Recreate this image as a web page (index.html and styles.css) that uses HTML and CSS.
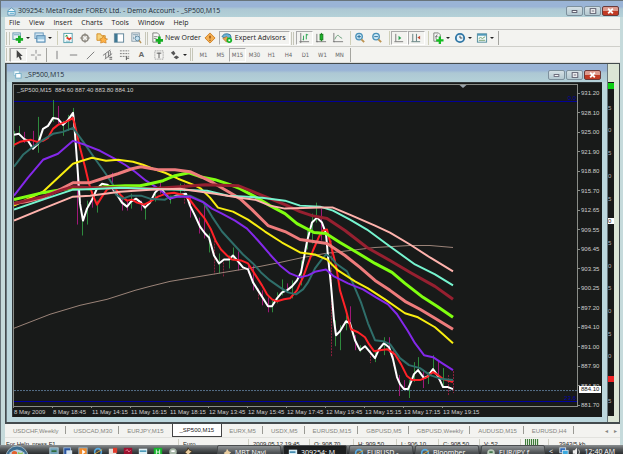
FILE: index.html
```html
<!DOCTYPE html>
<html lang="en">
<head>
<meta charset="utf-8">
<title>309254: MetaTrader FOREX Ltd. - Demo Account - _SP500,M15</title>
<link rel="stylesheet" href="styles.css">
</head>
<body>
<main class="app">
  <header class="titlebar">
    <svg class="app-icon" viewBox="0 0 10 10"><path d="M1 4L5 1L9 4V9H1Z" fill="#eaf6fb" stroke="#5b93b5"/><path d="M1 5H9M3 7H8" stroke="#4aa3c7"/></svg>
    <h1 class="title">309254: MetaTrader FOREX Ltd. - Demo Account - _SP500,M15</h1>
    <div class="controls">
      <button class="ctl" aria-label="Minimize"><svg viewBox="0 0 16 8"><rect x="5.500" y="3.500" width="5" height="2" fill="#fff" stroke="#556"/></svg></button>
      <button class="ctl" aria-label="Restore"><svg viewBox="0 0 16 8"><rect x="5.500" y="1.500" width="6" height="5" fill="#fff" stroke="#556"/><path d="M7 4H10" stroke="#556"/></svg></button>
      <button class="ctl close" aria-label="Close"><svg viewBox="0 0 16 8"><path d="M5.500 1.500L10.500 6.500M10.500 1.500L5.500 6.500" stroke="#fff" stroke-width="2"/></svg></button>
    </div>
  </header>
  <div class="client">
    <nav class="menu">
      <button>File</button><button>View</button><button>Insert</button><button>Charts</button><button>Tools</button><button>Window</button><button>Help</button>
    </nav>
    <div class="toolbar main-tools">
      <i class="grip"></i>
      <button class="tool drop" aria-label="New chart"><svg viewBox="0 0 13 13"><rect x="1" y="1" width="8" height="7" fill="#e8f1f6" stroke="#5f94ae"/><path d="M2 3H8" stroke="#6ba4bd"/><path d="M8 4V12M4 8H12" stroke="#15ad22" stroke-width="3"/></svg></button>
      <button class="tool drop" aria-label="Profiles"><svg viewBox="0 0 13 13"><rect x="1" y="1" width="9" height="6" fill="#cfe4f1" stroke="#6698bb"/><rect x="3" y="4" width="9" height="7" fill="#9cc7e0" stroke="#5386ad"/><path d="M4 9H11" stroke="#e8f6ff" stroke-width="2"/></svg></button>
      <i class="sep"></i>
      <button class="tool" aria-label="Market watch"><svg viewBox="0 0 13 13"><rect x="2" y="1.500" width="9" height="10" fill="#fff" stroke="#509dac"/><path d="M3 5L5 3L7 5Z" fill="#25a234"/><path d="M5 6L8 8L10 6" stroke="#e03a22" fill="none" stroke-width="2"/><path d="M4 10H9" stroke="#79b8c8"/></svg></button>
      <button class="tool" aria-label="Data window"><svg viewBox="0 0 13 13"><circle cx="6.500" cy="6.500" r="3.500" fill="none" stroke="#8b877e" stroke-width="1.500"/><path d="M6.500 1V5M6.500 8V12M1 6.500H5M8 6.500H12" stroke="#8b877e"/></svg></button>
      <button class="tool" aria-label="Navigator"><svg viewBox="0 0 13 13"><path d="M1 2H5L6 4H10V9H1Z" fill="#f7d37c" stroke="#d48d26"/><path d="M8 4L9.500 7L12.500 7.500L10.500 9.500L11 12L8 11L5 12L5.500 9L4 7.500L6.500 7Z" fill="#ffb347" stroke="#c77b1e" stroke-width=".7"/></svg></button>
      <button class="tool" aria-label="Terminal"><svg viewBox="0 0 13 13"><rect x="1.500" y="2" width="10" height="9" fill="#fff" stroke="#5d8298"/><rect x="2" y="2" width="3" height="9" fill="#3f7893"/></svg></button>
      <button class="tool" aria-label="Strategy tester"><svg viewBox="0 0 13 13"><rect x="2" y="1" width="8" height="9" fill="#edf2f5" stroke="#879ba7"/><path d="M3 3H9M4 5V8M6 4V7" stroke="#7595a6"/><circle cx="8" cy="7" r="2.500" fill="#c3e1f2" stroke="#638ba3"/><path d="M10 9L12 12" stroke="#b99253" stroke-width="1.500"/></svg></button>
      <i class="grip"></i>
      <button class="tool wide order"><svg viewBox="0 0 13 13"><path d="M2 1H7L9 3V11H2Z" fill="#f7f7f7" stroke="#7b8078"/><path d="M3 5H7M3 7H6" stroke="#8a8f86"/><path d="M9 5V13M5 9H13" stroke="#15ad22" stroke-width="3"/></svg>New Order</button>
      <button class="tool" aria-label="MetaEditor"><svg viewBox="0 0 13 13"><path d="M6.500 1L12 6.500L6.500 12L1 6.500Z" fill="#f4b053" stroke="#cf8126"/><path d="M6.500 4V7M6.500 8.500V9.500" stroke="#8d4b10" stroke-width="1.500"/></svg></button>
      <button class="tool wide pressed expert"><svg viewBox="0 0 13 13"><path d="M1 5Q3 1 7 2Q11 2 11 6L7 8Z" fill="#6ab3d6" stroke="#3a7b9d"/><path d="M2 7L6 11L9 8L6 5Z" fill="#e5a755" stroke="#a66e23" stroke-width=".7"/><circle cx="9" cy="9" r="3" fill="#14b325"/><rect x="8" y="8" width="2" height="2" fill="#fff"/></svg>Expert Advisors</button>
      <i class="grip"></i>
      <button class="tool pressed" aria-label="Bar chart"><svg viewBox="0 0 13 13"><path d="M3 1V10.500H12M1.500 10.500H3M3 10V12" stroke="#777" fill="none"/><path d="M6 4V9M5 8H6M9 2V8M9 3H11" stroke="#22a14b"/></svg></button>
      <button class="tool" aria-label="Candlesticks"><svg viewBox="0 0 13 13"><path d="M2 2V10.500H12M1 10.500H3" stroke="#777" fill="none"/><path d="M7 1V10" stroke="#167d1c"/><rect x="5.500" y="2.500" width="3" height="6" fill="#19b428" stroke="#167d1c"/></svg></button>
      <button class="tool" aria-label="Line chart"><svg viewBox="0 0 13 13"><path d="M2 1V10.500H12M1 10.500H3" stroke="#777" fill="none"/><path d="M3 8Q6 1 8 5L11 7" stroke="#69a079" fill="none"/></svg></button>
      <i class="sep"></i>
      <button class="tool" aria-label="Zoom in"><svg viewBox="0 0 13 13"><circle cx="5.500" cy="5" r="3.500" fill="#cdeaf7" stroke="#4b92b9" stroke-width="1.500"/><path d="M3.500 5H7.500M5.500 3V7" stroke="#286b98"/><path d="M8 8L11 11" stroke="#bd9350" stroke-width="2"/></svg></button>
      <button class="tool" aria-label="Zoom out"><svg viewBox="0 0 13 13"><circle cx="5.500" cy="5" r="3.500" fill="#cdeaf7" stroke="#4b92b9" stroke-width="1.500"/><path d="M3.500 5H7.500" stroke="#286b98"/><path d="M8 8L11 11" stroke="#bd9350" stroke-width="2"/></svg></button>
      <i class="sep"></i>
      <button class="tool pressed" aria-label="Auto scroll"><svg viewBox="0 0 13 13"><path d="M3 2V10.500H11M1.500 10.500H3" stroke="#777" fill="none"/><path d="M6 4L9 6.500L6 9Z" fill="#22a14b"/></svg></button>
      <button class="tool pressed" aria-label="Chart shift"><svg viewBox="0 0 13 13"><path d="M3 2V10.500H11M1.500 10.500H3M7 2V10" stroke="#5a7a7a" fill="none"/><path d="M11 4L8 6L11 8Z" fill="#c04a35"/></svg></button>
      <i class="sep"></i>
      <button class="tool drop" aria-label="Indicators"><svg viewBox="0 0 13 13"><path d="M2 1H7L9 3V10H2Z" fill="#f7f7f7" stroke="#7b8078"/><path d="M6 3Q4 3 4.500 8M3.500 5H6" stroke="#777" fill="none"/><path d="M8.500 5V13M4.500 9H12.500" stroke="#15bd22" stroke-width="2.500"/></svg></button>
      <button class="tool drop" aria-label="Periods"><svg viewBox="0 0 13 13"><circle cx="6.500" cy="6.500" r="4.500" fill="#e7f4fb" stroke="#2f76a5" stroke-width="2"/><path d="M6.500 4V6.500H9" stroke="#444" fill="none"/></svg></button>
      <button class="tool drop" aria-label="Templates"><svg viewBox="0 0 13 13"><rect x="1.500" y="2" width="10" height="9" fill="#f2fafa" stroke="#4f899b"/><path d="M2 3H11" stroke="#4f99b9" stroke-width="2"/><path d="M3 7L5 6L7 7L10 5M3 9H10" stroke="#729d68" fill="none"/></svg></button>
      <i class="sep thin"></i>
    </div>
    <div class="toolbar line-tools">
      <i class="grip"></i>
      <button class="tool pressed" aria-label="Cursor"><svg viewBox="0 0 13 13"><path d="M4 1V10L6 8L8 12L9.500 11L8 7.500H10.500Z" fill="#444"/></svg></button>
      <button class="tool" aria-label="Crosshair"><svg viewBox="0 0 13 13"><path d="M6.500 1V5M6.500 8V12M1 6.500H5M8 6.500H12" stroke="#888"/></svg></button>
      <i class="sep thin"></i>
      <button class="tool" aria-label="Vertical line"><svg viewBox="0 0 13 13"><path d="M6.500 2V11" stroke="#777"/></svg></button>
      <button class="tool" aria-label="Horizontal line"><svg viewBox="0 0 13 13"><path d="M2 6.500H10" stroke="#777"/></svg></button>
      <button class="tool" aria-label="Trendline"><svg viewBox="0 0 13 13"><path d="M2 11L10 3" stroke="#777"/></svg></button>
      <button class="tool" aria-label="Channel"><svg viewBox="0 0 13 13"><path d="M1 7L9 1M3 11L11 5M4 5V10M7 3V9M9 2V7" stroke="#777"/><path d="M8 11H11M8 9H11" stroke="#555"/></svg></button>
      <button class="tool" aria-label="Fibonacci"><svg viewBox="0 0 13 13"><path d="M1 2H11M1 5H11M1 8H11" stroke="#777" stroke-dasharray="2 1"/><path d="M8 8V12M8 10H11" stroke="#555"/></svg></button>
      <button class="tool letter" aria-label="Text">A</button>
      <button class="tool" aria-label="Text label"><svg viewBox="0 0 13 13"><rect x="2" y="2" width="9" height="9" fill="none" stroke="#888" stroke-dasharray="1 1"/><path d="M4 4.500H9M6.500 4V10" stroke="#555"/></svg></button>
      <button class="tool drop" aria-label="Arrows"><svg viewBox="0 0 13 13"><path d="M2 4L5 2L7 5L5 7Z" fill="#555"/><path d="M5 9L8 7L11 9L8 11Z" fill="#555"/></svg></button>
      <i class="grip"></i>
      <button class="tool period">M1</button><button class="tool period">M5</button><button class="tool period pressed">M15</button><button class="tool period">M30</button><button class="tool period">H1</button><button class="tool period">H4</button><button class="tool period">D1</button><button class="tool period">W1</button><button class="tool period">MN</button>
      <i class="sep thin"></i>
    </div>

    <section class="mdi">
      <article class="child">
        <header class="titlebar child-title">
          <svg class="app-icon" viewBox="0 0 10 10"><rect x="1" y="1" width="6" height="5" fill="#f3fafc" stroke="#8dbdd2"/><rect x="3" y="4" width="6" height="5" fill="#fff" stroke="#6ba9c4"/></svg>
          <h2 class="title">_SP500,M15</h2>
          <div class="controls">
            <button class="ctl" aria-label="Minimize chart"><svg viewBox="0 0 16 8"><rect x="5.500" y="3.500" width="5" height="2" fill="#fff" stroke="#667"/></svg></button>
            <button class="ctl" aria-label="Maximize chart"><svg viewBox="0 0 16 8"><rect x="5.500" y="1.500" width="6" height="5" fill="#fff" stroke="#556"/><path d="M7 4H10" stroke="#556"/></svg></button>
            <button class="ctl close" aria-label="Close chart"><svg viewBox="0 0 16 8"><path d="M5.500 1.500L10.500 6.500M10.500 1.500L5.500 6.500" stroke="#fff" stroke-width="2"/></svg></button>
          </div>
        </header>
        <div class="chart">
          <div class="plot">
            <svg class="series" viewBox="14 84 563 322" preserveAspectRatio="none" fill="none" stroke-linejoin="round">
              <path class="level" d="M14 100.500H577M14 401.500H577" stroke="#0000a0"/>
              <path class="level" d="M14 390.500H577" stroke="#56708a" stroke-dasharray="2 1"/>
              <path d="M459.500 84H466.500L463 87Z" fill="#9aa4ac"/>
              <path class="level" stroke="#2e8b3d" d="M14.500 130V146M19.500 125V135M38.500 116V152M53.500 99V121M63.500 120V135M68.500 114V130M73.500 107V120M82.500 216V235M87.500 200V224M97.500 200V212M131.500 193V208M145.500 207V219M155.500 190V201M170.500 195V203M180.500 183V197M209.500 233V252M219.500 253V273M229.500 255V268M233.500 247V260M272.500 300V312M277.500 292V303M282.500 279V295M292.500 280V298M301.500 260V285M307.500 230V249M312.500 213V243M316.500 202V222M335.500 320V346M340.500 325V350M346.500 315V330M360.500 345V352M375.500 350V362M384.500 337V355M409.500 380V398M414.500 362V382M418.500 357V372M428.500 372V384M433.500 355V372M443.500 368V387"/>
              <path class="level" stroke="#a01878" d="M24.500 131V142M33.500 130V148M58.500 105V123M77.500 170V224M92.500 197V207M112.500 172V190M122.500 195V210M127.500 200V210M141.500 200V210M160.500 182V193M190.500 195V217M199.500 217V233M204.500 205V238M238.500 251V270M248.500 265V273M253.500 265V290M262.500 290V305M268.500 297V312M287.500 283V292M321.500 208V240M350.500 306V330M355.500 335V350M389.500 337V352M399.500 375V396M404.500 380V390M423.500 370V388M438.500 360V380"/>
              <path class="level" stroke="#8d1f3d" stroke-dasharray="2 1" d="M184.500 183V203M214.500 240V274M223.500 262V276M258.500 288V300M331.500 240V356M370.500 350V363M393.500 350V366M448.500 375V395M453.500 371V393"/>
              <polyline stroke="#9b8478" points="14,328 50,314 80,305 107,299 135,290 150,286 170,281 200,276 230,271 260,266 280,262 303,257 325,253 350,250 375,247 410,245 430,245 453,247"/>
              <polyline stroke="#fff" stroke-width="2" points="14,134 19,133 24,138 28,140 33,148 38,143 43,128 48,125 53,117 58,118 63,124 68,119 73,112 74,120 77,160 80,203 83,220 87,208 92,199 97,188 102,183 107,184 112,187 117,194 122,202 127,206 131,201 136,198 141,202 145,207 150,202 155,192 160,187 165,193 170,198 176,195 181,194 186,193 190,205 195,215 200,226 205,233 209,237 214,255 219,263 224,259 229,259 233,255 238,261 243,267 248,269 253,282 258,290 263,298 268,306 272,306 277,298 282,292 287,290 292,286 297,280 301,272 304,257 307,241 312,222 317,217 322,222 326,233 328,256 331,285 334,320 336,335 340,331 346,321 350,323 355,340 360,350 365,346 370,352 375,358 379,349 384,343 389,347 393,359 397,377 400,384 404,389 408,389 411,382 414,374 418,370 424,378 428,376 433,369 438,376 443,387 448,387 453,389"/>
              <polyline stroke="#ff2228" stroke-width="2" points="14,144 20,141 25,140 31,139 37,141 43,140 48,137 53,128 58,124 63,122 68,120 73,117 76,129 80,147 85,166 89,183 93,195 97,204 102,196 107,189 112,187 117,190 122,196 127,200 132,199 137,202 144,204 150,201 158,196 166,193 174,192 182,194 189,198 195,206 204,217 211,229 216,241 221,249 227,255 232,259 241,260 248,263 255,274 262,285 267,294 272,299 277,301 284,299 290,298 297,290 303,277 307,266 313,250 319,236 323,230 327,229 331,245 336,265 340,290 346,310 351,329 358,332 365,337 369,344 374,351 380,350 387,349 395,354 401,364 407,376 412,380 420,380 427,377 433,372 438,375 443,379 453,382"/>
              <polyline stroke="#2f6e6a" stroke-width="2" points="14,166 23,154 33,146 43,139 53,133 63,131 73,127 84,142 95,158 105,172 113,184 116,194 123,198 131,195 141,195 150,198 165,199 170,196 190,195 203,201 212,216 222,231 232,242 243,254 253,263 261,272 270,280 280,287 288,292 296,294 303,289 308,282 315,268 321,260 326,254 331,257 336,263 347,271 353,283 361,302 368,323 375,340 383,341 390,344 400,358 409,365 420,368 430,375 442,379 453,380"/>
              <polyline stroke="#8428ea" stroke-width="2" points="14,195 28,177 43,159 58,153 73,140 85,144 100,150 115,158 125,164 135,171 146,180 160,189 170,198 178,196 190,196 204,202 212,208 222,213 235,220 247,228 258,240 270,254 280,265 290,273 300,277 308,275 316,271 326,269 334,276 348,283 363,289 376,297 388,304 397,314 408,331 415,343 424,355 433,357 442,363 453,370"/>
              <polyline stroke="#f8ee10" stroke-width="2" points="14,205 43,191 58,177 73,163 82,160 92,157 106,160 118,159 133,161 143,164 153,168 165,172 178,178 193,184 201,188 210,197 218,207 233,211 248,219 265,231 282,242 300,252 315,254 327,259 338,270 355,281 368,288 385,299 405,313 418,317 435,327 443,334 453,343"/>
              <polyline stroke="#7fff10" stroke-width="3" points="14,199 43,192 73,187 90,188 105,186 125,185 140,185 150,183 163,180 175,175 189,172 200,176 215,179 230,184 240,188 255,196 270,205 285,213 297,223 314,232 326,233 340,242 357,252 375,263 392,272 405,283 423,297 437,306 453,317"/>
              <polyline stroke="#ee7c7c" stroke-width="3" points="14,203 27,201 43,197 58,190 73,182 90,182 105,177 118,173 132,168 141,166 158,169 175,169 190,171 205,178 213,182 225,189 240,198 252,209 268,225 285,231 300,239 327,243 345,255 360,267 375,280 390,290 405,301 420,309 435,318 453,329"/>
              <polyline stroke="#962030" stroke-width="3" points="14,203 43,196 60,190 73,186 90,187 110,187 150,188 180,186 205,184 238,185 253,191 270,198 285,204 300,211 312,215 327,218 345,230 367,247 390,260 412,273 435,286 453,299"/>
              <polyline stroke="#76f5d0" stroke-width="2" points="14,209 43,199 73,189 100,188 120,187 150,188 180,189 207,190 228,195 262,197 285,200 300,205 320,206 333,210 350,219 367,229 390,246 415,264 435,274 453,285"/>
              <polyline stroke="#ffb3ad" stroke-width="2" points="14,220 43,208 73,196 90,195 120,191 150,189 180,188 215,193 240,197 255,199 270,205 285,208 320,207 333,207 352,215 375,225 390,232 410,244 430,257 453,271"/>
            </svg>
            <span class="quote">_SP500,M15&nbsp; 884.60 887.40 883.80 884.10</span>
            <span class="fib fib-top">0.0</span>
            <span class="fib fib-bottom">23.6</span>
          </div>
          <div class="prices">
            <span>931.20</span><span>928.10</span><span>925.00</span><span>921.90</span><span>918.80</span><span>915.70</span><span>912.65</span><span>909.55</span><span>906.45</span><span>903.35</span><span>900.25</span><span>897.20</span><span>894.10</span><span>891.00</span><span>887.90</span><span>884.80</span><span>881.70</span>
            <strong class="current">884.10</strong>
          </div>
          <div class="times">
            <span>8 May 2009</span><span>8 May 18:45</span><span>11 May 14:15</span><span>11 May 16:15</span><span>11 May 18:15</span><span>12 May 13:45</span><span>12 May 15:45</span><span>12 May 17:45</span><span>12 May 19:45</span><span>13 May 15:15</span><span>13 May 17:15</span><span>13 May 19:15</span>
          </div>
        </div>
      </article>
      <aside class="behind">
        <div class="behind-axis">
          <span class="tag green"></span><span>5</span><span>0</span><span>5</span><span>0</span><span>5</span><span class="tag white">0</span><span>5</span><span>0</span><span>5</span><span>0</span><span>5</span><span>0</span><span class="tag red"></span><span>5</span>
        </div>
      </aside>
    </section>

    <nav class="tabs">
      <button>USDCHF,Weekly</button><button>USDCAD,M30</button><button class="before">EURJPY,M15</button><button class="active">_SP500,M15</button><button>EURX,M5</button><button>USDX,M5</button><button>EURUSD,M15</button><button>GBPUSD,M5</button><button>GBPUSD,Weekly</button><button>AUDUSD,M15</button><button>EURUSD,H4</button>
      <span class="scroll"><button aria-label="Scroll left">◂</button><button aria-label="Scroll right">▸</button></span>
    </nav>
    <footer class="status">
      <span>For Help, press F1</span><span>Euro</span><span>2009.05.12 19:45</span><span>O: 908.70</span><span>H: 909.50</span><span>L: 906.10</span><span>C: 908.50</span><span>V: 52</span><span class="signal"><i class="bars"></i></span><span>3943/5 kb</span>
    </footer>
  </div>
</main>
<footer class="taskbar">
  <button class="start" aria-label="Start"><svg viewBox="0 0 24 24"><circle cx="12" cy="12" r="11" fill="#3c6c8e" stroke="#9fb3c0"/><path d="M4 8Q12 1 20 8L17 11H7Z" fill="#b9cfdc"/><path d="M7 7Q9 5 12 7V12H6Z" fill="#e4622e"/><path d="M13 7Q16 9 18 7L17 12H12Z" fill="#8cc152"/></svg></button>
  <div class="quick">
    <svg viewBox="0 0 12 12"><rect x="1" y="1" width="10" height="9" fill="#6f9fb5" stroke="#b8d0da"/><path d="M3 5H9" stroke="#2f6d3d" stroke-width="2"/></svg>
    <svg viewBox="0 0 12 12"><rect x="1" y="1" width="8" height="8" fill="#2753a0" stroke="#a9c4e0"/><rect x="4" y="4" width="7" height="6" fill="#d6e4ef"/></svg>
    <svg viewBox="0 0 12 12"><rect x="1" y="1" width="10" height="10" fill="#f08a2a" stroke="#8ab6d8"/><path d="M5 3L9 6L5 9Z" fill="#fff"/></svg>
    <svg viewBox="0 0 12 12"><circle cx="6" cy="6" r="4" fill="none" stroke="#58a9df" stroke-width="2"/><path d="M1 9L11 3" stroke="#e4b33d"/></svg>
    <svg viewBox="0 0 12 12"><rect x="1" y="2" width="9" height="8" fill="#e6ded9"/><rect x="6" y="1" width="5" height="6" fill="#e13b2c"/></svg>
    <svg viewBox="0 0 12 12"><rect x="1" y="1" width="10" height="10" fill="#9d1230"/><path d="M3 5L5 3L7 6L9 4" stroke="#ef8c9b" fill="none"/></svg>
    <svg viewBox="0 0 12 12"><rect x="1" y="2" width="10" height="8" fill="#dff0f5"/><path d="M2 5H10" stroke="#4e9bb9" stroke-width="2"/></svg>
    <svg viewBox="0 0 12 12"><rect x="1" y="1" width="10" height="10" fill="#16b52c"/><path d="M4 3V9M8 3V9M4 6H8" stroke="#fff"/></svg>
    <svg viewBox="0 0 12 12"><circle cx="6" cy="6" r="4.500" fill="#a8b8a9"/><path d="M4 5H8" stroke="#fff" stroke-width="2"/></svg>
    <svg viewBox="0 0 12 12"><path d="M6 1L8 4L11 5L8 8L9 12L5 9L2 6L5 4Z" fill="#e8cda0" stroke="#3b2b15"/></svg>
  </div>
  <button class="task"><svg viewBox="0 0 12 12"><path d="M6 1L8 4L11 5L8 8L9 12L5 9L2 6L5 4Z" fill="#e8cda0"/></svg>MBT Navi</button>
  <button class="task current-task"><svg viewBox="0 0 12 12"><rect x="1" y="2" width="10" height="9" fill="#d9edf5"/><path d="M2 5H9" stroke="#438bb0" stroke-width="2"/></svg>309254: M</button>
  <button class="task"><svg viewBox="0 0 12 12"><circle cx="6" cy="6" r="4" fill="none" stroke="#58a9df" stroke-width="2"/><path d="M1 9L11 3" stroke="#e4b33d"/></svg>EURUSD -</button>
  <button class="task"><svg viewBox="0 0 12 12"><circle cx="6" cy="6" r="4" fill="none" stroke="#58a9df" stroke-width="2"/><path d="M1 9L11 3" stroke="#e4b33d"/></svg>Bloomber</button>
  <button class="task"><svg viewBox="0 0 12 12"><circle cx="6" cy="6" r="4.500" fill="#b9cab9"/><path d="M4 5H8" stroke="#42744c" stroke-width="2"/></svg>EUR/JPY f</button>
  <div class="tray">
    <span>&lt;</span>
    <svg viewBox="0 0 12 12"><rect x="1" y="1" width="7" height="6" fill="#2764b5" stroke="#dbe7ef"/><rect x="4" y="4" width="7" height="6" fill="#3ba8dd" stroke="#dbe7ef"/></svg>
    <svg viewBox="0 0 12 12"><path d="M1 4H3L6 1V11L3 8H1Z" fill="#eee"/><path d="M8 3Q10 6 8 9" stroke="#ddd" fill="none"/></svg>
    <time>12:40 AM</time>
  </div>
</footer>
</body>
</html>
```
FILE: styles.css
```css
* {
  box-sizing: border-box;
}

body {
  margin: 0;
  padding-right: 2px;
  height: 100vh;
  display: flex;
  flex-direction: column;
  overflow: hidden;
  background: #fff;
  color: #222;
  font: 7px/10px "Open Sans", "Noto Sans", sans-serif;
}

button {
  margin: 0;
  padding: 0;
  border: 0;
  background: none;
  color: inherit;
  font: inherit;
  white-space: nowrap;
}

svg {
  display: block;
}

.app {
  flex: 1;
  min-height: 0;
  display: flex;
  flex-direction: column;
  border: solid #68747a;
  border-width: 1px 0 0 1px;
  background: #c5dadb;
}

.titlebar {
  flex: none;
  display: flex;
  align-items: center;
  height: 16px;
  padding: 4px 4px 0 6px;
  background: linear-gradient(#9ab4d6 35%, #adc8d4 50%, #b4d1d8);
}

.app-icon {
  width: 9px;
  height: 9px;
  margin-right: 2px;
}

.title {
  flex: 1;
  margin: 0;
  color: #1d2a38;
  font-size: 7px;
  font-weight: 400;
  white-space: nowrap;
}

.controls {
  display: flex;
  gap: 1px;
}

.ctl {
  width: 17px;
  height: 10px;
  border: 1px solid #7d909d;
  border-radius: 2px;
  background: linear-gradient(#d5e0e5, #b3c8d0);
}

.ctl svg {
  width: 100%;
  height: 8px;
}

.close {
  border-color: #6a3a3a;
  background: linear-gradient(#dd9a8e 45%, #c13a24 50%);
}

.client {
  flex: 1;
  min-height: 0;
  display: flex;
  flex-direction: column;
  margin: 0 3px 0 4px;
  background: #f3f3f0;
}

.menu {
  flex: none;
  display: flex;
  gap: 9px;
  height: 13px;
  padding-left: 4px;
  border-bottom: 1px solid #c2c2c0;
}

.toolbar {
  flex: none;
  display: flex;
  align-items: center;
  height: 17px;
  padding-left: 1px;
  border-bottom: 1px solid #cfcfca;
}

.line-tools {
  height: 16px;
  border-bottom-color: #dededa;
}

.grip {
  width: 4px;
  height: 13px;
  border: solid #c6c6b8;
  border-width: 0 1px;
}

.grip:not(:first-child) {
  width: 3px;
  margin: 0 2px 0 1px;
}

.sep {
  width: 1px;
  height: 14px;
  margin: 0 1px 0 3px;
  background: #cfcfb8;
}

.thin {
  margin: 0 1px 0 2px;
  background: #a5a5a0;
}

.tool {
  display: flex;
  flex: none;
  align-items: center;
  justify-content: center;
  width: 17px;
  height: 14px;
}

.tool svg {
  flex: none;
  width: 12px;
  height: 12px;
}

.drop {
  width: 22px;
  gap: 2px;
}

.drop::after {
  content: "";
  border: 2px solid transparent;
  border-top-color: #222;
  border-bottom: 0;
}

.wide {
  width: auto;
  gap: 2px;
  padding: 0 1px;
}

.expert {
  padding: 0 3px 0 1px;
}

.pressed {
  border: 1px solid;
  border-color: #aaa #fff #fff #aaa;
}

.letter {
  color: #666;
  font: 700 8px/10px "Liberation Sans", sans-serif;
}

.period {
  color: #666;
  font: 6px/10px "DejaVu Sans Condensed", "DejaVu Sans", sans-serif;
}

.mdi {
  flex: 1;
  min-height: 0;
  display: flex;
  border: 1px solid #444b4e;
  border-bottom-width: 2px;
}

.child {
  flex: 1;
  min-width: 0;
  display: flex;
  flex-direction: column;
  padding: 0 5px 5px;
  border: solid #69787e;
  border-width: 0 1px;
  background: #bcd7dd;
}

.child-title {
  height: 18px;
  margin: 0 -5px;
  padding: 3px 6px 0 6px;
}

.child-title .title {
  margin-left: 1px;
}

.chart {
  flex: 1;
  min-height: 0;
  display: grid;
  grid-template: 1fr 10px / 1fr 24px;
  border: solid #303638;
  border-width: 1px 0 0 1px;
  padding-top: 1px;
  background: #181a19;
  color: #cfcfcf;
  font: 6px/10px "Liberation Sans", sans-serif;
}

.plot {
  position: relative;
  min-height: 0;
  border: 1px solid #8a8d88;
}

.series {
  width: 100%;
  height: 100%;
}

.level {
  shape-rendering: crispEdges;
}

.quote,
.fib {
  position: absolute;
  line-height: 8px;
  white-space: nowrap;
}

.quote {
  top: 1px;
  left: 3px;
}

.fib {
  right: 1px;
  color: #0000a8;
}

.fib-top {
  top: 9px;
}

.fib-bottom {
  bottom: 4px;
}

.prices {
  position: relative;
  display: flex;
  flex-direction: column;
  justify-content: space-between;
  margin: 4px 0 -3px;
}

.prices span {
  display: flex;
  align-items: center;
  gap: 1px;
}

.prices span::before {
  content: "";
  width: 2px;
  height: 1px;
  background: #8a8d88;
}

.current {
  position: absolute;
  right: 1px;
  bottom: 17px;
  width: 22px;
  padding-left: 2px;
  background: #fff;
  color: #111;
  font-weight: 400;
  line-height: 7px;
}

.times {
  grid-column: 1 / -1;
  display: grid;
  grid-auto-flow: column;
  grid-auto-columns: 39px;
  white-space: nowrap;
}

.times span {
  border-left: 1px solid transparent;
  border-image: linear-gradient(#8a8d88 2px, transparent 2px) 1;
}

.behind {
  width: 11px;
  display: flex;
  padding: 18px 5px 6px 0;
  background: #dbe5d5;
}

.behind-axis {
  flex: 1;
  display: flex;
  flex-direction: column;
  justify-content: space-between;
  padding: 1px 0 11px;
  overflow: hidden;
  background: #181a19;
  color: #b5b5b5;
  font: 6px/7px "Liberation Sans", sans-serif;
}

.tag {
  height: 6px;
}

.green {
  background: #0bce12;
}

.white {
  background: #fff;
  color: #222;
}

.red {
  background: #ee2222;
}

.tabs {
  flex: none;
  display: flex;
  height: 13px;
  padding-left: 1px;
  color: #85857f;
  font: 6px/10px "Liberation Sans", sans-serif;
}

.tabs > button {
  position: relative;
  padding: 0 8px 0 7px;
}

.tabs > button:not(.active):not(.before)::after {
  content: "";
  position: absolute;
  top: 2px;
  right: 1px;
  width: 1px;
  height: 8px;
  background: #9a9a94;
}

.tabs > .active {
  padding: 0 7px;
  border: 1px solid #444;
  border-top: 0;
  background: #fff;
  color: #222;
}

.scroll {
  display: flex;
  gap: 6px;
  margin-left: auto;
  padding-right: 3px;
}

.status {
  flex: none;
  display: grid;
  grid-template-columns: 173px 70px 61px 44px 43px 42px 41px 41px 28px 1fr;
  height: 8px;
  padding-top: 1px;
  overflow: hidden;
  border-top: 1px solid #e2e2de;
  color: #222;
  font: 6px/10px "Liberation Sans", sans-serif;
  white-space: nowrap;
}

.status span {
  padding-left: 4px;
  border-left: 1px solid #d0d0c4;
}

.status span:first-child {
  padding-left: 1px;
  border: 0;
}

.status span:last-child {
  padding-left: 10px;
}

.bars {
  display: block;
  width: 14px;
  height: 8px;
  background: repeating-linear-gradient(90deg, #3d7a3a 0 1px, #d7e4d0 1px 2px);
}

.taskbar {
  flex: none;
  display: flex;
  height: 9px;
  overflow: hidden;
  background: linear-gradient(#8b8f91, #55595b 45%, #2b2e30);
  color: #fff;
  font: 7px/10px "Open Sans", sans-serif;
}

.start {
  width: 24px;
  height: 24px;
  margin: 0 20px 0 5px;
}

.quick {
  flex: none;
  display: flex;
  gap: 4px;
  width: 168px;
  padding-top: 2px;
}

.quick svg {
  width: 10px;
  height: 10px;
}

.quick svg:nth-child(n + 3) {
  margin-left: 1px;
}

.task {
  display: flex;
  flex: 0 1 64px;
  gap: 3px;
  height: 16px;
  margin-right: 2px;
  padding: 2px 4px 0;
  overflow: hidden;
  border: 1px solid #4a4d4f;
  border-radius: 2px;
  background: linear-gradient(#909496, #4c5052 50%);
}

.current-task {
  background: #1d1f20;
}

.task svg,
.tray svg {
  flex: none;
  width: 10px;
  height: 10px;
}

.tray {
  flex: 1;
  display: flex;
  justify-content: flex-end;
  gap: 3px;
  padding: 2px 8px 0 0;
  white-space: nowrap;
}

.tray span {
  margin-right: auto;
  padding-left: 2px;
}
```
